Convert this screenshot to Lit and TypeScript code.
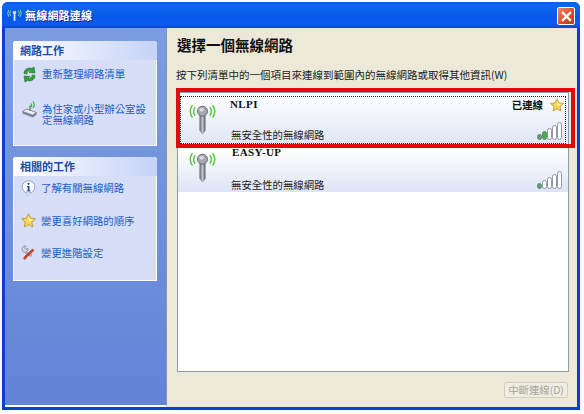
import { LitElement, html, css, svg } from "lit";
import { customElement } from "lit/decorators.js";

const antenna = svg`<svg width="31" height="33" viewBox="0 0 34 36">
  <g fill="none" stroke="#58c03a" stroke-width="1.500">
    <path d="M9 5.500Q5.500 10 9 15"/><path d="M6 3.500Q1 10 6 17"/>
    <path d="M25 5.500Q28.500 10 25 15"/><path d="M28 3.500Q33 10 28 17"/>
  </g>
  <defs><linearGradient id="m" x1="0" x2="1"><stop offset="0" stop-color="#666a78"/><stop offset=".5" stop-color="#c4c6d0"/><stop offset="1" stop-color="#5b5e6c"/></linearGradient></defs>
  <path d="M14 12h6v19l-3 4-3-4z" fill="url(#m)" stroke="#6b6d78" stroke-width=".6"/>
  <circle cx="17" cy="10" r="5.500" fill="#a5a8b4" stroke="#61646f"/>
  <ellipse cx="16" cy="8.500" rx="2.500" ry="2" fill="#dcdde4"/>
</svg>`;

const bars = (lit: number) => svg`<svg width="25" height="18" viewBox="0 0 25 18">
  ${[6, 9, 12, 15, 18].map((h, i) => svg`
    <rect x=${i * 5 + 0.5} y=${18 - h + 0.5} width="4" height=${h - 1} rx="2"
      fill=${i < lit ? (i === 0 ? "#5f9f72" : "#45b04f") : "#fff"} stroke=${i < lit ? "#5c8c6c" : "#8f96a4"}/>`)}
</svg>`;

const star = (s: number) => svg`<svg width=${s} height=${s} viewBox="0 0 16 16">
  <path d="M8 .8l2.200 4.800 5.200.6-3.900 3.500 1.100 5.200L8 12.300l-4.600 2.600 1.100-5.200L.6 6.200l5.200-.6z" fill="#f6d64e" stroke="#a98c2c" stroke-width=".8"/>
  <path d="M8 3l1.400 3.400 3.600.4-3 2.200L8 8z" fill="#fff3b0"/>
</svg>`;

const refresh = svg`<svg width="15" height="17" viewBox="0 0 15 17">
  <path d="M2 7.500C2 3.500 6 1 10 2.500L12 .8 13 7 7 6.500 9 4.800C7 4 5 5.500 5 8z" fill="#35a03c" stroke="#1c6a28" stroke-width=".6"/>
  <path d="M13 9.500C13 13.500 9 16 5 14.500L3 16.200 2 10l6 .5-2 1.700c2 .8 4-.7 4-3.200z" fill="#35a03c" stroke="#1c6a28" stroke-width=".6"/>
</svg>`;

const homeNet = svg`<svg width="15" height="17" viewBox="0 0 15 17">
  <path d="M.5 10.500l4-2.500 10 3.500-4 2.500z" fill="#eef0f6" stroke="#6f748a" stroke-width=".8"/>
  <path d="M.5 10.500v2l10 4 4-2.500v-2.500l-4 2.500z" fill="#7d8298"/>
  <path d="M9 6q1.500-1.500 0-3.500M11 7q2.500-3 0-6.500" fill="none" stroke="#35a83f" stroke-width="1.100"/>
  <path d="M8 4.500v5" stroke="#2f7e3c" stroke-width="1.200"/>
</svg>`;

const info = svg`<svg width="15" height="16" viewBox="0 0 15 16">
  <circle cx="7.500" cy="7" r="6.300" fill="#fff" stroke="#8ea4c8"/>
  <path d="M5 12l1 3.500 3-2.500z" fill="#fff" stroke="#8ea4c8" stroke-width=".6"/>
  <circle cx="7.500" cy="3.800" r="1.100" fill="#1c4a9a"/>
  <path d="M6 6h2.500v4.500h1v1H5.800v-1h.9V7H6z" fill="#1c4a9a"/>
</svg>`;

const tools = svg`<svg width="15" height="15" viewBox="0 0 15 15">
  <path d="M1 3.500A3.500 3.500 0 0 1 5 .8L3.500 3l1.500 1.500L7 3a3.500 3.500 0 0 1-2.500 4L11 10l-1 1.500L3.500 7.500A3.500 3.500 0 0 1 1 3.500z" fill="#d5d8e0" stroke="#70747f" stroke-width=".6"/>
  <path d="M13 5.500L5.500 12.500l-1.500 2-1.500-1 1.500-2.500L11.500 4z" fill="#d8402c" stroke="#8a2a1c" stroke-width=".5"/>
</svg>`;

@customElement("app-root")
export class AppRoot extends LitElement {
  static styles = css`
    :host { display: block; width: 584px; height: 414px; background: #fff; overflow: hidden;
      font-family: "Noto Sans CJK TC", "Liberation Sans", sans-serif; font-size: 10.4px; color: #222; }
    .win { position: relative; width: 578px; height: 408px; margin: 2px 0 0 2px; display: flex; flex-direction: column;
      background: #0a3fd6; border-radius: 6px 6px 0 0; box-sizing: border-box; padding: 0 3px 3px; }
    .title { height: 26px; margin: 0 -3px; padding: 0 5px 0 5px; flex: none; display: flex; align-items: center; gap: 3px;
      border-radius: 6px 6px 0 0; background: linear-gradient(#0a5ae0 0, #0a6af2 12%, #0758e8 55%, #0a5cf0 85%, #0a48c8 100%); }
    .title .t { color: #fff; font-weight: 700; font-size: 11px; letter-spacing: .2px; text-shadow: 1px 1px 0 #0a2a8c; }
    .close { margin-left: auto; margin-top: 2px; width: 18px; height: 18px; box-sizing: border-box; border: 1px solid #fff; border-radius: 2px;
      background: linear-gradient(135deg, #ef8a68, #d8502c 55%, #b8381c); display: flex; align-items: center; justify-content: center; }
    .body { flex: 1; display: flex; min-height: 0; }
    .side { width: 162px; flex: none; box-sizing: border-box; padding: 13px 10px 0 8px;
      background: linear-gradient(#7c9de0, #6284d8); border-right: 1px solid #8a93a8; border-bottom: 2px solid #fff; display: flex; flex-direction: column; gap: 11px; }
    .panel { width: 144px; background: #d6dff7; border: 1px solid #fff; border-top: 0; box-sizing: border-box; border-radius: 3px 3px 0 0; }
    .panel.a { height: 105px; }
    .panel.b { height: 124px; }
    .ph { height: 19px; box-sizing: border-box; margin: 0 -1px; display: flex; align-items: center; padding: 0 0 2px 7px; font-weight: 700; font-size: 11px; color: #1f4aa8;
      border-radius: 3px 3px 0 0; background: linear-gradient(90deg, #fff, #c6d3f7); }
    .li { display: flex; gap: 5px; color: #215dc6; align-items: flex-start; line-height: 11px; }
    .li span { padding-top: 2px; }
    .li svg { flex: none; }
    .a .links { padding: 6px 8px 0 8px; display: flex; flex-direction: column; gap: 18px; }
    .b .links { padding: 4px 8px 0 7px; display: flex; flex-direction: column; gap: 17px; }
    .main { flex: 1; background: #ece9d8; padding: 7px 8px 0 10px; display: flex; flex-direction: column; min-width: 0; }
    h1 { margin: 0; font-size: 14.500px; line-height: 20px; font-weight: 700; color: #111; }
    .intro { margin-top: 13px; line-height: 14px; white-space: nowrap; color: #222; font-size: 10.500px; margin-left: -1px; }
    .list { margin-top: 10px; height: 280px; width: 392px; box-sizing: border-box; flex: none; background: #fff; border: 1px solid #8a9cb0; }
    .net { height: 44px; box-sizing: border-box; padding: 1px 2px 0; background: linear-gradient(#fff, #dde4f6); }
    .net.first { height: 55px; padding: 3px 2px 4px; }
    .net.first .in { outline: 1px dotted #222; outline-offset: -1px; }
    .in { height: 100%; display: grid; grid-template-columns: 50px 1fr auto; grid-template-rows: 1fr auto; box-sizing: border-box; }
    .ic { grid-row: 1 / 3; padding: 6px 0 0 7px; }
    .net:not(.first) .ic { padding-top: 1px; }
    .name { font-family: "Liberation Serif", serif; font-weight: 700; font-size: 11px; line-height: 13px; color: #111; padding-top: 2px; letter-spacing: .4px; }
    .net:not(.first) .name { padding-top: 0; margin-top: -3px; padding-left: 2px; }
    .st { display: flex; gap: 7px; align-items: flex-start; font-weight: 700; color: #111; padding: 2px 2px 0 0; line-height: 13px; }
    .sec { line-height: 13px; padding: 0 0 3px 1px; color: #222; align-self: end; }
    .net:not(.first) .sec { padding-bottom: 1px; }
    .bars { align-self: end; justify-self: end; line-height: 0; padding: 0 4px 4px 0; }
    .net:not(.first) .bars { padding-bottom: 3px; }
    .foot { display: flex; justify-content: flex-end; padding: 10px 0 0; }
    .btn { width: 64px; height: 16px; margin-right: 1px; box-sizing: border-box; border: 1px solid #cfcdc0; border-radius: 2px; background: #f0eee3;
      color: #a6a498; text-align: center; line-height: 14px; font-size: 10.400px; }
    .red { position: absolute; left: 174px; top: 86px; width: 399px; height: 60px; box-sizing: border-box; border: 4px solid #e20a0a; }
  `;

  render() {
    return html`<div class="win">
      <div class="title">
        <svg width="15" height="13" viewBox="0 0 17 14">
          <g fill="none" stroke="#9be08a" stroke-width="1"><path d="M4 1.500Q2 4.500 4 7.500"/><path d="M13 1.500Q15 4.500 13 7.500"/><path d="M2 .5Q-.5 4.500 2 8.500"/><path d="M15 .5Q17.500 4.500 15 8.500"/></g>
          <path d="M8.500 3v10" stroke="#e8ecf5" stroke-width="2"/><circle cx="8.500" cy="3.500" r="2" fill="#d8dce8"/>
        </svg>
        <span class="t">無線網路連線</span>
        <div class="close"><svg width="11" height="11" viewBox="0 0 10 10"><path d="M1 1l8 8M9 1l-8 8" stroke="#fff" stroke-width="2"/></svg></div>
      </div>
      <div class="body">
        <div class="side">
          <div class="panel a">
            <div class="ph">網路工作</div>
            <div class="links">
              <div class="li">${refresh}<span>重新整理網路清單</span></div>
              <div class="li">${homeNet}<span>為住家或小型辦公室設定無線網路</span></div>
            </div>
          </div>
          <div class="panel b">
            <div class="ph">相關的工作</div>
            <div class="links">
              <div class="li">${info}<span>了解有關無線網路</span></div>
              <div class="li">${star(15)}<span>變更喜好網路的順序</span></div>
              <div class="li">${tools}<span>變更進階設定</span></div>
            </div>
          </div>
        </div>
        <div class="main">
          <h1>選擇一個無線網路</h1>
          <div class="intro">按下列清單中的一個項目來連線到範圍內的無線網路或取得其他資訊(W)</div>
          <div class="list">
            <div class="net first"><div class="in">
              <div class="ic">${antenna}</div>
              <div class="name">NLPI</div>
              <div class="st"><span>已連線</span>${star(14)}</div>
              <div class="sec">無安全性的無線網路</div>
              <div class="bars">${bars(2)}</div>
            </div></div>
            <div class="net"><div class="in">
              <div class="ic">${antenna}</div>
              <div class="name">EASY-UP</div>
              <div></div>
              <div class="sec">無安全性的無線網路</div>
              <div class="bars">${bars(1)}</div>
            </div></div>
          </div>
          <div class="foot"><div class="btn">中斷連線(D)</div></div>
        </div>
      </div>
      <div class="red"></div>
    </div>`;
  }
}
